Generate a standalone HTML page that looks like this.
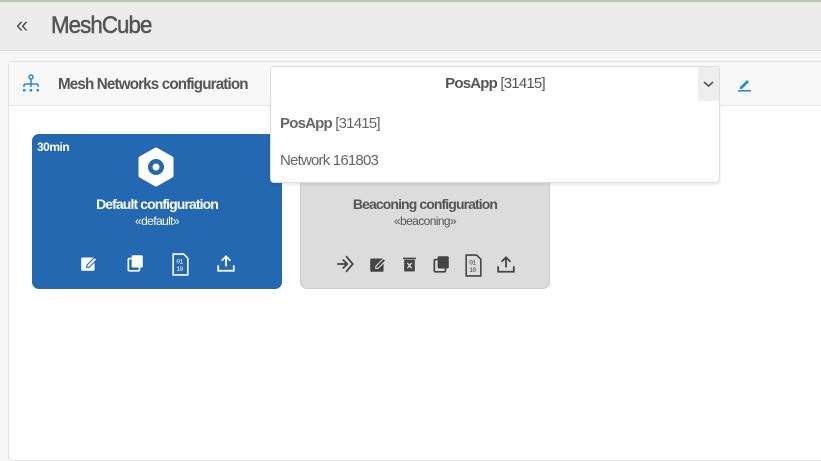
<!DOCTYPE html>
<html><head><meta charset="utf-8"><style>
*{box-sizing:border-box;margin:0;padding:0}
body{width:821px;height:413px;overflow:hidden;background:#f7f7f7;font-family:"Liberation Sans",sans-serif;color:#555;position:relative;letter-spacing:-0.5px}
.top{position:absolute;left:0;top:0;width:821px;height:51px;background:#ececec;border-top:2px solid #b9c9b0;border-bottom:1px solid #ddd}
.top .ch{position:absolute;left:16px;top:10px;font-size:22px;color:#555}
.top .t{position:absolute;left:51px;top:10px;font-size:24px;color:#555;letter-spacing:-1px;-webkit-text-stroke:0.5px #555;transform:scaleX(0.93);transform-origin:left}
.panel{position:absolute;left:8px;top:61px;width:820px;height:400px;background:#fff;border:1px solid #e3e3e3;border-radius:4px}
.hdr{position:absolute;left:0;top:0;width:100%;height:44px;background:#f8f8f8;border-bottom:1px solid #e5e5e5}
.hdr .lbl{position:absolute;left:49px;top:14px;font-size:16px;font-weight:bold;color:#555;letter-spacing:-0.9px;transform:scaleX(0.95);transform-origin:left}
.sel{position:absolute;left:270px;top:66px;width:450px;height:36px;background:#fff;border:1px solid #ddd;border-bottom:1px dotted #ddd;border-radius:3px 3px 0 0;text-align:center;font-size:15px;line-height:34px;font-weight:bold;color:#555;letter-spacing:-0.8px}
.sel .w{font-weight:normal}
.sel .btn{position:absolute;right:0;top:0;width:21px;height:34px;background:#eee}
.menu{position:absolute;left:270px;top:101px;width:450px;height:82px;background:#fff;border:1px solid #ddd;border-top:none;border-radius:0 0 4px 4px;box-shadow:0 2px 3px rgba(0,0,0,.08);z-index:5;font-size:15px;color:#666;letter-spacing:-0.8px}
.menu div{position:absolute;left:9px}
.card{position:absolute;top:134px;width:250px;height:155px;border-radius:7px}
.c1{left:32px;background:#2368b0;color:#fff}
.c2{left:300px;background:#dcdcdc;border:1px solid #ccc;color:#555}
.card .n{position:absolute;top:62px;width:100%;text-align:center;font-size:14px;font-weight:bold;letter-spacing:-0.9px}
.card .s{position:absolute;top:80px;width:100%;text-align:center;font-size:12px;letter-spacing:-0.6px}
.icons{position:absolute;top:119px;left:0;width:100%;display:flex;justify-content:center}
</style></head><body>
<div class="top"><div class="ch">«</div><div class="t">MeshCube</div></div>
<div class="panel"><div class="hdr">
<svg style="position:absolute;left:12px;top:12px" width="20" height="20" viewBox="0 0 20 20" fill="none" stroke="#2a8ad8" stroke-width="1.5"><circle cx="10" cy="3" r="2"/><path d="M10 5v5M3 10h14M3 10v3M10 10v3M17 10v3"/><rect x="2" y="15" width="2.5" height="2.5" fill="#2a8ad8" stroke="none"/><rect x="8.7" y="15" width="2.5" height="2.5" fill="#2a8ad8" stroke="none"/><rect x="15.5" y="15" width="2.5" height="2.5" fill="#2a8ad8" stroke="none"/></svg>
<div class="lbl">Mesh Networks configuration</div>
<svg style="position:absolute;left:728px;top:14px" width="16" height="16" viewBox="0 0 16 16"><path d="M3 11l7-7 2 2-7 7H3z" fill="#2a8ad8"/><rect x="1" y="14" width="13" height="1.6" fill="#2a8ad8"/></svg>
</div></div>
<div class="sel">PosApp <span class="w">[31415]</span><div class="btn"><svg width="21" height="34" viewBox="0 0 21 34"><path d="M6 15l4.5 4 4.5-4" fill="none" stroke="#555" stroke-width="1.6"/></svg></div></div>
<div class="menu"><div style="top:14px"><b>PosApp</b> [31415]</div><div style="top:51px">Network 161803</div></div>

<div class="card c1">
<div style="position:absolute;left:5px;top:6px;font-size:12px;font-weight:bold">30min</div>
<div style="position:absolute;right:0;top:6px;font-size:12px;font-weight:bold;line-height:15px">F<br>F</div>
<svg style="position:absolute;left:104px;top:13px" width="40" height="40" viewBox="0 0 40 40"><path d="M20 3l15 8.5v17L20 37 5 28.5v-17z" fill="#fff" stroke="#fff" stroke-width="5" stroke-linejoin="round"/><circle cx="20" cy="20" r="8" fill="#2368b0"/><circle cx="20" cy="20" r="3.5" fill="#fff"/></svg>
<div class="n">Default configuration</div><div class="s">«default»</div>
<div class="icons" style="gap:26px">
<svg width="20" height="20" viewBox="0 0 18 18"><rect x="2" y="4" width="12" height="12" rx="1" fill="#fff"/><path d="M7 11l7-7 2 2-7 7H7z" fill="#fff" stroke="#2368b0" stroke-width="1"/></svg>
<svg width="20" height="20" viewBox="0 0 18 18"><rect x="3" y="5" width="10" height="11" rx="1" fill="none" stroke="#fff" stroke-width="1.5"/><rect x="6" y="2" width="10" height="11" rx="1" fill="#fff"/></svg>
<svg width="19" height="23" viewBox="0 0 18 22"><path d="M2 1h10l4 4v16H2z" fill="none" stroke="#fff" stroke-width="1.5"/><text x="5" y="10" font-size="6" fill="#fff" font-family="Liberation Mono">01</text><text x="5" y="17" font-size="6" fill="#fff" font-family="Liberation Mono">10</text></svg>
<svg width="20" height="20" viewBox="0 0 18 18"><path d="M9 12V3M5 7l4-4 4 4M2 11v5h14v-5" fill="none" stroke="#fff" stroke-width="1.6"/></svg>
</div></div>

<div class="card c2">
<div class="n" style="top:61px">Beaconing configuration</div><div class="s" style="top:79px">«beaconing»</div>
<div class="icons" style="gap:13px;top:119px">
<svg width="20" height="20" viewBox="0 0 18 18"><path d="M2 9h9M7 5l4 4-4 4M10 2l6 7-6 7" fill="none" stroke="#444" stroke-width="1.6"/></svg>
<svg width="20" height="20" viewBox="0 0 18 18"><rect x="2" y="4" width="12" height="12" rx="1" fill="#444"/><path d="M7 11l7-7 2 2-7 7H7z" fill="#444" stroke="#dcdcdc" stroke-width="1"/></svg>
<svg width="17" height="20" viewBox="0 0 16 18"><rect x="3" y="5" width="10" height="11" fill="#444"/><rect x="2" y="3" width="12" height="1.5" fill="#444"/><path d="M6 8l4 5M10 8l-4 5" stroke="#dcdcdc" stroke-width="1.3"/></svg>
<svg width="20" height="20" viewBox="0 0 18 18"><rect x="3" y="5" width="10" height="11" rx="1" fill="none" stroke="#444" stroke-width="1.5"/><rect x="6" y="2" width="10" height="11" rx="1" fill="#444"/></svg>
<svg width="19" height="23" viewBox="0 0 18 22"><path d="M2 1h10l4 4v16H2z" fill="none" stroke="#444" stroke-width="1.5"/><text x="5" y="10" font-size="6" fill="#444" font-family="Liberation Mono">01</text><text x="5" y="17" font-size="6" fill="#444" font-family="Liberation Mono">10</text></svg>
<svg width="20" height="20" viewBox="0 0 18 18"><path d="M9 12V3M5 7l4-4 4 4M2 11v5h14v-5" fill="none" stroke="#444" stroke-width="1.6"/></svg>
</div></div>
</body></html>
